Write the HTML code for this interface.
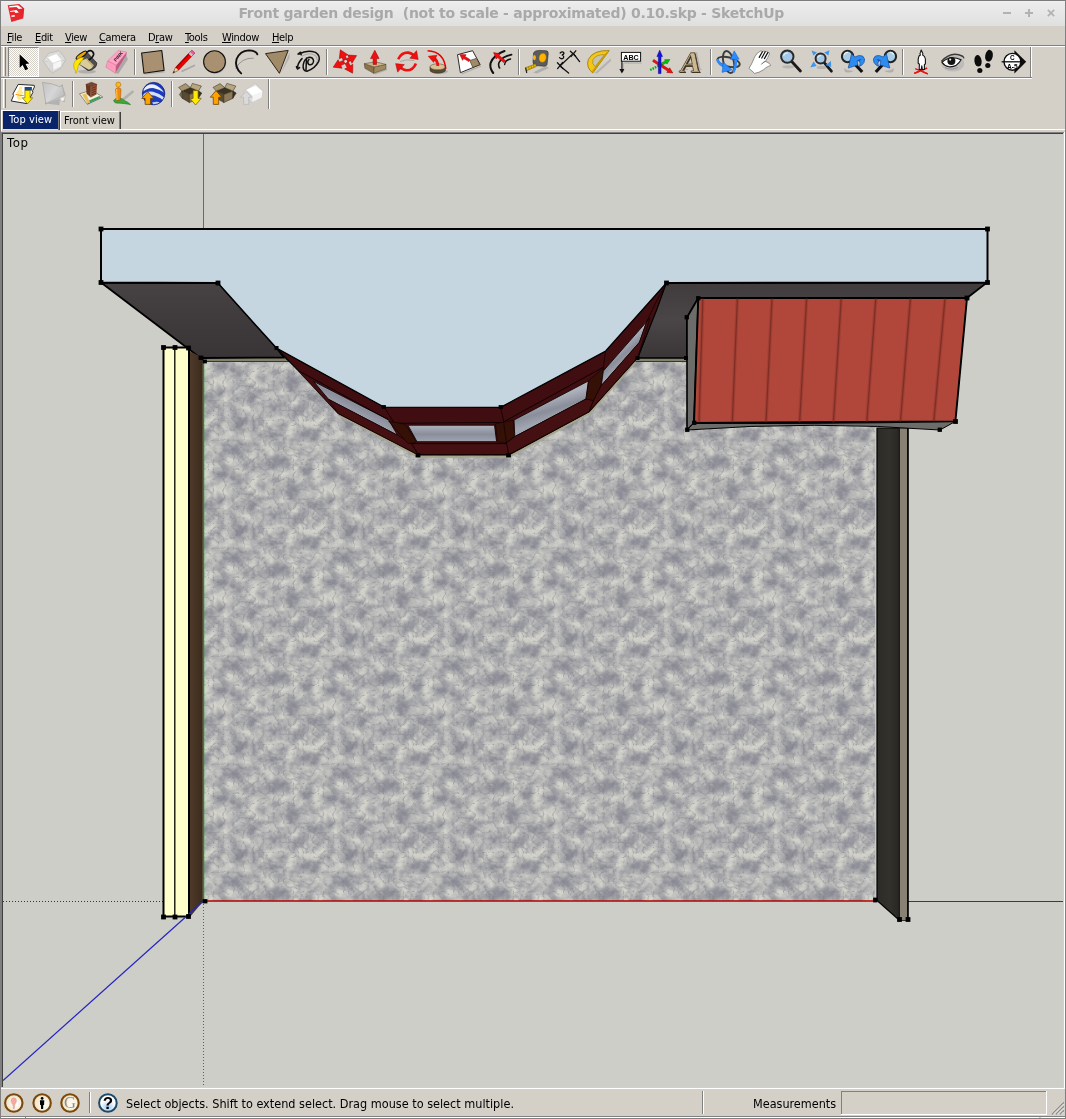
<!DOCTYPE html>
<html lang="en">
<head>
<meta charset="utf-8">
<title>Front garden design (not to scale - approximated) 0.10.skp - SketchUp</title>
<style>
*{box-sizing:border-box;margin:0;padding:0}
html,body{width:1066px;height:1119px;overflow:hidden;background:#d4d0c8}
body{position:relative;font-family:"DejaVu Sans Condensed","DejaVu Sans","Liberation Sans",sans-serif;font-size:11px;color:#000}
.abs{position:absolute}
#frame{position:absolute;left:0;top:0;width:1066px;height:1119px;border:1px solid #808080;border-top-color:#7a7a7a;pointer-events:none;z-index:50}
#title{position:absolute;left:1px;top:1px;width:1064px;height:25px;background:linear-gradient(#f3f3f3 0,#ececec 6%,#e7e7e7 45%,#e1e1e1 90%,#e0e0e0 100%);}
#title .t{will-change:transform;position:absolute;left:0;width:1020.4px;top:4px;text-align:center;font-family:"DejaVu Sans","Liberation Sans",sans-serif;font-weight:bold;font-size:14px;color:#a9a9a9;white-space:pre;letter-spacing:-0.26px}
#menubar{position:absolute;left:1px;top:26px;width:1064px;height:19px;background:#d4d0c8}
#menubar span{will-change:transform;position:absolute;top:5px;font-size:11px;line-height:13px;white-space:nowrap;letter-spacing:-0.35px}
#menubar u{text-decoration:underline;text-underline-offset:1px}
.hl-d{position:absolute;height:1px;background:#808080}
.hl-w{position:absolute;height:1px;background:#ffffff}
.vl-d{position:absolute;width:1px;background:#808080}
.vl-w{position:absolute;width:1px;background:#ffffff}
.ico{position:absolute;width:24px;height:24px;overflow:visible}
#tabs span{will-change:transform;position:absolute;font-size:11px;line-height:13px;white-space:nowrap}
#view{position:absolute;left:3px;top:134px;width:1060px;height:953px;background:#cdcec8;overflow:hidden}
#status{position:absolute;left:1px;top:1090px;width:1064px;height:28px}
#status span{will-change:transform;position:absolute;font-size:11px;line-height:13px;white-space:nowrap}
</style>
</head>
<body>
<div id="title"><div class="t">Front garden design  (not to scale - approximated) 0.10.skp - SketchUp</div>
<svg class="abs" style="left:0;top:0" width="1064" height="25" viewBox="1 1 1064 25">
<g>
<polygon points="7.7,5.2 19.1,3.9 24.2,8.4 23.1,18.4 11.3,22" fill="#e8282e"/>
<polygon points="19.1,3.9 24.2,8.4 23.1,18.4 21,14 20.5,8" fill="#de2026" opacity=".6"/>
<polygon points="9,6.2 18,5.3 22.5,8.4 18.8,9 16.5,7.1 9.4,7.5" fill="#fff"/>
<polygon points="10.1,10.9 16.5,10.1 18.8,12.6 15.4,12.9 14.3,11.6 10.3,12" fill="#fff"/>
<polygon points="11.3,15.4 14.6,15 15,16.5 11.6,17.1" fill="#fff"/>
</g>
<g fill="#b2b2b2">
<rect x="1003" y="12" width="8" height="2"/>
<rect x="1025" y="12" width="8" height="2"/><rect x="1028" y="9" width="2" height="8"/>
<path d="M1047.2,10.4 L1048.4,9.2 L1051,11.8 L1053.6,9.2 L1054.8,10.4 L1052.2,13 L1054.8,15.6 L1053.6,16.8 L1051,14.2 L1048.4,16.8 L1047.2,15.6 L1049.8,13Z"/>
</g></svg>
</div>
<div id="menubar">
<span style="left:5.7px"><u>F</u>ile</span>
<span style="left:33.7px"><u>E</u>dit</span>
<span style="left:64px"><u>V</u>iew</span>
<span style="left:98px"><u>C</u>amera</span>
<span style="left:146.7px">D<u>r</u>aw</span>
<span style="left:183.7px"><u>T</u>ools</span>
<span style="left:220.9px"><u>W</u>indow</span>
<span style="left:270.6px"><u>H</u>elp</span>
</div>
<div id="toolbars">
<div class="hl-d" style="left:1px;top:45px;width:1064px"></div>
<div class="hl-w" style="left:1px;top:46px;width:1064px"></div>
<div class="hl-d" style="left:1px;top:77px;width:1031px"></div>
<div class="hl-w" style="left:1px;top:78px;width:1031px"></div>
<div class="vl-w" style="left:3px;top:47px;height:29px"></div>
<div class="vl-d" style="left:5px;top:47px;height:29px"></div>
<div class="vl-w" style="left:3px;top:79px;height:29px"></div>
<div class="vl-d" style="left:5px;top:79px;height:29px"></div>
<div class="abs" style="left:8px;top:47px;width:31px;height:30px;border:1px solid;border-color:#808080 #fff #fff #808080;background-color:#fff;background-image:conic-gradient(#d4d0c8 25%,#fff 0 50%,#d4d0c8 0 75%,#fff 0);background-size:2px 2px"></div>
<svg class="abs" style="left:0;top:46px;will-change:transform" width="1066" height="64" viewBox="0 46 1066 64"><defs><linearGradient id="terr" x1="0" y1="0" x2="1" y2=".6"><stop offset="0" stop-color="#c2c2c2"/><stop offset=".55" stop-color="#d6d6d6"/><stop offset="1" stop-color="#bcbcbc"/></linearGradient></defs>
<g transform="translate(8,46)"><polygon points="11.6,8.2 11.6,22 14.6,19 17.2,24.3 20.2,23 17.6,17.9 21.4,17.6" fill="#000" stroke="#fff" stroke-width="1.2" stroke-linejoin="round" paint-order="stroke"/></g>
<g transform="translate(39,46)"><polygon points="4,14.6 9.6,7.4 20.6,4.6 26.8,13.6 22,22 12.8,27.4" fill="#e6e6e6" fill-opacity=".6" stroke="#bdbdbd" stroke-width="1"/>
<path d="M4,14.6 L14.6,17.8 L26.8,13.6 M14.6,17.8 L12.8,27.4" fill="none" stroke="#c6c6c6" stroke-width=".9"/>
<path d="M9.6,7.4 L10.2,17 L12.8,27.4 M20.6,4.6 L21.4,14 L22,22 M10.2,17 L21.4,14" fill="none" stroke="#d0d0d0" stroke-width=".7"/>
<polygon points="8.5,11.6 13.8,17.4 13.8,24 9.1,17.8" fill="#d8d8d8"/>
<polygon points="13.8,17.4 22.5,14 21.9,20.3 13.8,24" fill="#f6f6f6"/>
<polygon points="8.5,11.6 17.3,8.1 22.5,14 13.8,17.4" fill="#ffffff"/>
<path d="M8.5,11.6 L13.8,17.4 L22.5,14 M13.8,17.4 L13.8,24" fill="none" stroke="#c8c8c8" stroke-width=".5"/></g>
<g transform="translate(70,46)"><ellipse cx="17" cy="25.6" rx="9" ry="1.9" fill="#9a9a9a" opacity=".6"/>
<path d="M16.3,5.6 L26.8,16.9 Q27,19.6 24.6,22 Q21.6,24.6 18,24.6 L9.3,18 L6.6,12.6Z" fill="#4e4e4e" stroke="#1c1c1c" stroke-width=".7" stroke-linejoin="round"/>
<path d="M11.4,14.6 L17,12.4 L23.6,19.2 Q22.4,22.6 19,23.8 L9.9,18.4Z" fill="#dacd9a"/>
<path d="M17,12.4 L23.6,19.2 L22.8,20.8 L16,13.4Z" fill="#b8ab7a"/>
<ellipse cx="11.4" cy="9.2" rx="6.3" ry="2" transform="rotate(-36 11.4 9.2)" fill="#f0a400" stroke="#111" stroke-width="1.1"/>
<path d="M17.5,5.8 Q20,3.6 22.6,5.6 Q24.8,8 22.6,10.8 Q21,12.8 19.2,13.7" fill="none" stroke="#111" stroke-width="1.6" stroke-linecap="round"/>
<path d="M13.7,11.3 Q10.6,11.4 8.7,12.5 Q6,13.6 4.4,16 Q2.8,18.8 4.2,22.4 Q5.2,24 5.6,25.2 Q5,26.6 5.6,27.2 Q6.8,27.2 6.6,25.8 Q7.8,23.4 7.8,21.6 Q8.2,18.8 9.9,16.9 Q11.4,15 12.8,13.4Z" fill="#ffe600" stroke="#a88a00" stroke-width=".5"/></g>
<g transform="translate(101,46)"><polygon points="14.4,27.3 25.4,9 26.8,13.6 17.4,27.8" fill="#9c9c9c" opacity=".75"/>
<polygon points="15.2,19.2 25.7,6.1 25.4,9 14.4,27.3" fill="#c05a84"/>
<polygon points="6.8,14.8 15.2,19.2 14.4,27.3 4.8,21.2" fill="#ff9cbc" stroke="#c86088" stroke-width=".4"/>
<polygon points="6.8,14.8 17.3,4.4 25.7,6.1 15.2,19.2" fill="#ffa6c4" stroke="#c86088" stroke-width=".4"/>
<text x="0" y="0" transform="translate(15,16) rotate(-51)" font-family="Liberation Sans, sans-serif" font-weight="bold" font-size="4.8" fill="#3a1c28">PINK</text></g>
<rect x="134" y="49" width="1" height="26" fill="#808080"/><rect x="135" y="49" width="1" height="26" fill="#fff"/>
<g transform="translate(138,46)"><polygon points="6.5,27.8 26.5,25.2 26.8,26.4 6.8,28.6" fill="#9a9a9a" opacity=".6"/>
<polygon points="3.6,7 23.8,4.5 26.1,24.4 5.9,27.2" fill="#a89070" stroke="#141414" stroke-width="1.1" stroke-linejoin="round"/></g>
<g transform="translate(169,46)"><line x1="12.5" y1="25.5" x2="26" y2="19.2" stroke="#9c9ca0" stroke-width="1.6" opacity=".8"/>
<g transform="translate(3.9,27.2) rotate(-46.5)">
<polygon points="0,0 6,-2.1 6,2.1" fill="#e8d8a0"/>
<polygon points="0,0 2.3,-0.8 2.3,0.8" fill="#111"/>
<rect x="6" y="-2.1" width="19" height="4.2" fill="#ee0000"/>
<rect x="6" y="-2.1" width="19" height="1.2" fill="#b00000"/>
<rect x="25" y="-2.1" width="2" height="4.2" fill="#c8c8c8"/>
<rect x="27" y="-2.1" width="2.8" height="4.2" rx="1" fill="#ff50b0"/>
<polygon points="0,0 6,-2.1 29.8,-2.1 29.8,2.1 6,2.1" fill="none" stroke="#400" stroke-width=".4"/>
</g></g>
<g transform="translate(200,46)"><ellipse cx="15.3" cy="16.6" rx="11" ry="11" fill="#9a9a9a" opacity=".5"/>
<circle cx="14.5" cy="15.7" r="10.9" fill="#a89070" stroke="#111" stroke-width="1.1"/></g>
<g transform="translate(231,46)"><path d="M22.7,12.2 Q10.5,11.5 4.7,22.5" fill="none" stroke="#8c8c8c" stroke-width=".9"/>
<path d="M26.4,8.3 Q25,4.6 17.5,4.4 Q9,5 5.6,13 Q3.2,21 10.2,27.4" fill="none" stroke="#111" stroke-width="1.9" stroke-linecap="round"/></g>
<g transform="translate(262,46)"><polygon points="19,27.3 27.5,6.5 27.5,12" fill="#9c9ca0" opacity=".6"/>
<polygon points="3.5,7.6 26.2,4.4 17.4,27.3" fill="#a08a68" stroke="#2c2418" stroke-width="1" stroke-linejoin="round"/></g>
<g transform="translate(293,46)"><path d="M9,10 Q17,5.5 23,10 Q26,14 23,19" fill="none" stroke="#9a9a9a" stroke-width=".8"/>
<path d="M6,8.2 Q14,3.2 22.5,6.4 Q28,10 25.6,15.6 Q22,22.5 14,25.2 Q9.5,25 10.2,19 Q11,13 15.5,11.4 Q20,11 20.6,15 Q20,19.5 16,18.6 Q13.5,16.5 16,13.4 M13.5,12 L13,24 M9,12.6 Q4.6,17 4.4,22.5 M3.4,20.6 L4.4,23 L6.6,21.6 M5,8 l2.6,-1.8 l.6,2.6" fill="none" stroke="#111" stroke-width="1.5" stroke-linecap="round" stroke-linejoin="round"/></g>
<rect x="326" y="49" width="1" height="26" fill="#808080"/><rect x="327" y="49" width="1" height="26" fill="#fff"/>
<g transform="translate(330,46)"><circle cx="15.7" cy="15.3" r="3" fill="#e8e8e8"/><polygon points="16.7,13.2 15.2,9.9 17.8,8.7 10.3,3.8 9.3,12.7 11.9,11.4 13.4,14.7" fill="#f01010" stroke="#900000" stroke-width=".5" stroke-linejoin="round"/><polygon points="17.8,16.2 20.7,14.7 22.0,17.3 26.6,9.6 17.7,9.0 19.0,11.5 16.2,13.0" fill="#f01010" stroke="#900000" stroke-width=".5" stroke-linejoin="round"/><polygon points="15.0,17.6 17.2,21.5 14.7,23.0 22.6,27.2 22.9,18.3 20.3,19.7 18.1,15.8" fill="#f01010" stroke="#900000" stroke-width=".5" stroke-linejoin="round"/><polygon points="13.4,14.4 9.3,16.3 8.1,13.7 3.2,21.2 12.1,22.2 10.8,19.6 15.0,17.6" fill="#f01010" stroke="#900000" stroke-width=".5" stroke-linejoin="round"/></g>
<g transform="translate(361,46)"><polygon points="13,27.6 25.6,23 26.6,24 14,28.6" fill="#9a9a9a" opacity=".6"/>
<polygon points="3.3,17.7 13.2,20.9 12.6,27.3 3.9,22.3" fill="#8a7450" stroke="#4a3c24" stroke-width=".5"/>
<polygon points="13.2,20.9 25,18.4 25,22.9 12.6,27.3" fill="#a08a62" stroke="#4a3c24" stroke-width=".5"/>
<polygon points="3.3,17.7 14.4,15.8 25,18.4 13.2,20.9" fill="#cdb88c" stroke="#4a3c24" stroke-width=".5"/>
<polygon points="15.5,18.4 15.5,12.6 18.1,12.6 13.8,4.2 9.5,12.6 12.1,12.6 12.1,18.4" fill="#f01010" stroke="#900000" stroke-width=".5" stroke-linejoin="round"/></g>
<g transform="translate(392,46)"><path d="M6.2,13.2 Q9.5,6.2 16.2,6.6 Q20.4,7.2 22.4,10.4" fill="none" stroke="#f01010" stroke-width="2.6"/>
<polygon points="24.6,4.6 26.2,13.6 17.8,12.2" fill="#f01010" stroke="#900" stroke-width=".4"/>
<path d="M23.9,17.4 Q21,24.6 14.2,24.2 Q10,23.6 8,20.8" fill="none" stroke="#f01010" stroke-width="2.6"/>
<polygon points="5.6,26.2 3.6,17.6 12.4,18.6" fill="#f01010" stroke="#900" stroke-width=".4"/>
<path d="M8,15.5 Q14,12.8 22,14.4" fill="none" stroke="#909090" stroke-width=".9" opacity=".7"/></g>
<g transform="translate(423,46)"><ellipse cx="16.4" cy="25.6" rx="8.6" ry="2.2" fill="#9a9a9a" opacity=".6"/>
<path d="M7,20.8 L7,24.2 A7.7,3 0 0 0 22.4,24.2 L22.4,20.8Z" fill="#5a4a32" stroke="#2c2414" stroke-width=".5"/>
<ellipse cx="14.7" cy="20.8" rx="7.7" ry="3" fill="#d6c296" stroke="#4a3c24" stroke-width=".5"/>
<path d="M4.6,4.8 Q21,5.5 22.8,23" fill="none" stroke="#e00000" stroke-width="1.5"/>
<path d="M14.8,20 Q14.8,13.8 9.4,11" fill="none" stroke="#f01010" stroke-width="2.8"/>
<polygon points="5.2,10.2 14,9.2 10.6,16.4" fill="#f01010" stroke="#900" stroke-width=".4"/></g>
<g transform="translate(454,46)"><polygon points="7.4,27.4 27,19.4 27.4,20.6 8,28.4" fill="#9a9a9a" opacity=".6"/>
<polygon points="3.5,8.7 18.6,4.7 26.2,18.6 6.4,26.7" fill="#ffffff" stroke="#2a2a2a" stroke-width="1" stroke-linejoin="round"/>
<polygon points="15.7,14.5 22.1,12.4 25.8,18.6 18.8,21.4" fill="#a08a68" stroke="#3a3020" stroke-width=".6"/>
<polygon points="16.0,13.6 11.0,10.4 12.1,8.7 5.8,8.6 8.6,14.3 9.7,12.5 14.8,15.6" fill="#f01010" stroke="#900000" stroke-width=".5" stroke-linejoin="round"/></g>
<g transform="translate(485,46)"><path d="M19.5,5 Q8.5,9 5.6,17 Q4.4,22 8.2,27" fill="none" stroke="#111" stroke-width="2.1" stroke-linecap="round"/>
<path d="M26.6,8.6 Q17,10.5 14,16.5 Q13,19.5 14.6,22" fill="none" stroke="#111" stroke-width="1.6" stroke-linecap="round"/>
<path d="M25.6,13 Q20,14 19.6,18.6" fill="none" stroke="#111" stroke-width="1.3" stroke-linecap="round"/>
<polygon points="20.4,14.6 14.1,9.4 15.3,7.8 8.6,6.6 11.2,13.0 12.4,11.4 18.8,16.6" fill="#f01010" stroke="#900000" stroke-width=".5" stroke-linejoin="round"/></g>
<rect x="518" y="49" width="1" height="26" fill="#808080"/><rect x="519" y="49" width="1" height="26" fill="#fff"/>
<g transform="translate(522,46)"><polygon points="11,26.6 24,20 27,22 15,27.6" fill="#9a9a9a" opacity=".6"/>
<path d="M11.6,6.8 Q13,4.2 18,4.4 L24.6,4.8 Q26.6,5.2 26.2,8 L25,18.6 Q24.4,20.4 22,20.2 L14,19.6 Q11,19 11,16Z" fill="#5c5c5c" stroke="#2a2a2a" stroke-width=".6"/>
<ellipse cx="20.6" cy="11.8" rx="3.6" ry="4.6" transform="rotate(12 20.6 11.8)" fill="#ffb400" stroke="#8a6000" stroke-width=".4"/>
<ellipse cx="12.4" cy="11.6" rx="1.5" ry="2.6" fill="#ffb400"/>
<polygon points="3.4,21.8 13.6,17.8 14.4,20.4 4.4,24.8" fill="#f0c000" stroke="#5a4600" stroke-width=".5"/>
<path d="M3.6,21.6 L4.8,27" stroke="#222" stroke-width="1.2"/>
<path d="M6.5,21 l.8,2.2 M9,20 l.8,2.2 M11.4,19 l.8,2.2" stroke="#5a4600" stroke-width=".5"/></g>
<g transform="translate(553,46)"><g fill="none" stroke="#111" stroke-width="1.3" stroke-linecap="round">
<path d="M7,20 L20.2,7.4"/><path d="M20.2,7.4 L26.6,15.6"/><path d="M7,20 L15.6,27"/>
<path d="M17.4,5.2 L22.6,10.2 M22.8,4.8 L18,10.6"/><path d="M4.4,16.8 L10,22.6 M9.6,16.4 L4.6,22.6"/>
<path d="M7.2,7 Q9.4,4.6 11,7 Q10.6,9 8.8,9 Q11.4,9.6 10.4,12 Q8.4,13.6 6.6,11.6"/></g></g>
<g transform="translate(584,46)"><polygon points="10.6,27 26.6,12.6 27,15 13,27.6" fill="#9a9a9a" opacity=".55"/>
<path d="M25.2,4.6 L8.8,27 Q1.6,21.4 4.4,13.4 Q9,4 25.2,4.6Z" fill="#f4c618" stroke="#a07c00" stroke-width=".9" stroke-linejoin="round"/>
<path d="M20.6,8.6 L11.2,20.6 Q7.4,18 9,13.6 Q12,8.4 20.6,8.6Z" fill="#c4c4b4" stroke="#a07c00" stroke-width=".6"/>
<path d="M23.6,6 L8.4,25.6" stroke="#c89c00" stroke-width="1.4" fill="none"/></g>
<g transform="translate(615,46)"><path d="M9.2,17 L26.6,17 M8,17 L8,26" stroke="#a8a8a8" stroke-width="1.2" fill="none"/>
<rect x="6.4" y="6.4" width="19.2" height="8.8" fill="#fff" stroke="#111" stroke-width="1"/>
<text x="16" y="13.7" text-anchor="middle" font-family="Liberation Sans, sans-serif" font-weight="bold" font-size="7.6" fill="#000" textLength="15.5" lengthAdjust="spacingAndGlyphs">ABC</text>
<path d="M6.9,15 L6.9,24" stroke="#111" stroke-width="1.1"/>
<polygon points="4.4,23 9.4,23 6.9,27.6" fill="#111"/></g>
<g transform="translate(646,46)"><path d="M4.2,24 L13.7,19.3" stroke="#00b400" stroke-width="2.4" stroke-dasharray="1.6,1" fill="none"/>
<polygon points="14.2,20.3 20.3,16.8 21.0,18.0 23.8,13.6 18.6,13.7 19.3,14.9 13.2,18.3" fill="#00c800" stroke="#006400" stroke-width=".5" stroke-linejoin="round"/><polygon points="6.6,15.4 21.6,25.1 20.8,26.4 26.8,27.0 23.7,21.8 22.9,23.1 7.8,13.4" fill="#f01010" stroke="#800" stroke-width=".5" stroke-linejoin="round"/><polygon points="15.0,27.6 15.0,10.6 16.5,10.6 13.7,4.2 10.9,10.6 12.4,10.6 12.4,27.6" fill="#1414e6" stroke="#000080" stroke-width=".5" stroke-linejoin="round"/></g>
<g transform="translate(677,46)"><g transform="translate(15,0) skewX(-10) translate(-15,0)">
<text x="19.4" y="24.4" text-anchor="middle" font-family="Liberation Serif, serif" font-weight="bold" font-size="27" fill="#9a9a9a" opacity=".55">A</text>
<text x="18" y="27.4" text-anchor="middle" font-family="Liberation Serif, serif" font-weight="bold" font-size="29" fill="#3c3224">A</text>
<text x="17.4" y="26.8" text-anchor="middle" font-family="Liberation Serif, serif" font-weight="bold" font-size="29" fill="#3c3224">A</text>
<text x="16.8" y="26" text-anchor="middle" font-family="Liberation Serif, serif" font-weight="bold" font-size="29" fill="#ccb890" stroke="#4a3c28" stroke-width=".7">A</text></g></g>
<rect x="710" y="49" width="1" height="26" fill="#808080"/><rect x="711" y="49" width="1" height="26" fill="#fff"/>
<g transform="translate(714,46)"><ellipse cx="14.6" cy="16" rx="5.2" ry="11.2" transform="rotate(-14 14.6 16)" fill="none" stroke="#3c3c3c" stroke-width="1.9"/>
<ellipse cx="14.6" cy="16" rx="11.4" ry="4.6" transform="rotate(14 14.6 16)" fill="none" stroke="#3c3c3c" stroke-width="1.9"/>
<path d="M3.4,13 Q4,18.5 13,21.6" fill="none" stroke="#2c8cff" stroke-width="2.6"/>
<polygon points="9.4,16 18,24 8,26.4" fill="#2c8cff" stroke="#0a4cb0" stroke-width=".4"/>
<path d="M19.4,26.2 Q22.6,20 21.6,12" fill="none" stroke="#2c8cff" stroke-width="2.6"/>
<polygon points="16.4,13.4 20.2,4.8 25.2,13.2" fill="#2c8cff" stroke="#0a4cb0" stroke-width=".4"/></g>
<g transform="translate(745,46)"><path d="M4,22.4 Q7.4,17 9.6,11 Q12,6.4 15.2,5.2 Q16.6,4.6 17.4,5.6 Q19,4.6 20.2,5.6 Q22,5 22.8,6.2 Q24.6,6.2 24.4,8 Q23,11.6 20.4,15.4 Q23,16 25.6,18.8 Q25.6,20.4 23.6,20.2 Q21,21.2 18.4,23.8 Q14,26.8 9.6,27.4Z" fill="#fff" stroke="#555" stroke-width=".6"/>
<path d="M17.4,5.8 L14.2,11.4 M20.2,5.8 L16.8,12 M22.8,6.6 L19.4,12.6" stroke="#111" stroke-width="1.2" fill="none" stroke-linecap="round"/>
<path d="M20.4,15.4 Q18,16 16.4,18.4" stroke="#444" stroke-width=".9" fill="none"/></g>
<g transform="translate(776,46)"><ellipse cx="12.3" cy="20.8" rx="6.2" ry="1.6" fill="#9a9a9a" opacity=".5"/>
<line x1="15.5" y1="15.2" x2="24.4" y2="25.0" stroke="#1a1a1a" stroke-width="2.8" stroke-linecap="round"/>
<circle cx="11.3" cy="10.6" r="6.2" fill="#a4c8e6" stroke="#2a2a2a" stroke-width="2"/>
<path d="M7.6,10.0 a3.7,3.7 0 0 1 4.3,-2.8" fill="none" stroke="#dcecf8" stroke-width="1.2"/></g>
<g transform="translate(807,46)"><ellipse cx="14.6" cy="21.4" rx="5.0" ry="1.6" fill="#9a9a9a" opacity=".5"/>
<line x1="16.8" y1="16.2" x2="24.4" y2="25.2" stroke="#1a1a1a" stroke-width="2.8" stroke-linecap="round"/>
<circle cx="13.6" cy="12.4" r="5.0" fill="#a4c8e6" stroke="#2a2a2a" stroke-width="2"/>
<path d="M10.6,11.9 a3.0,3.0 0 0 1 3.5,-2.2" fill="none" stroke="#dcecf8" stroke-width="1.2"/><polygon points="4.6,4.6 10,6.6 6.4,9.6" fill="#3c96f0"/><polygon points="22.4,4.2 21.4,9.6 17.2,6.4" fill="#3c96f0"/><polygon points="3.2,21.6 6.6,15.6 9.6,20" fill="#3c96f0"/><polygon points="24,15 24.2,21 18.6,19" fill="#3c96f0"/></g>
<g transform="translate(838,46)"><path d="M6,22 Q10,25.6 16,24.6 Q13,27.6 7,26Z" fill="#9a9a9a" opacity=".6"/>
<line x1="14" y1="15" x2="24.2" y2="26" stroke="#111" stroke-width="3.2" stroke-linecap="butt"/>
<circle cx="9.6" cy="10.5" r="5.7" fill="#a8cce4" stroke="#222" stroke-width="2"/>
<path d="M6.2,9 a3.6,3.6 0 0 1 4,-2.6" fill="none" stroke="#e4f0f8" stroke-width="1.3"/>
<path d="M10.2,22.1 L13.6,7.8 L16.8,11 Q21,8.4 24.6,10 Q27.8,12.6 26,16.6 Q24.2,19.6 21.4,20.4 Q22.6,17.4 21.6,15.6 Q20.4,14.4 19.2,14.8 L20,19 Z" fill="#2c8cf0" stroke="#0a3c90" stroke-width=".6" stroke-linejoin="round"/>
<path d="M19.2,14.8 Q21,12.6 23.6,13.6 Q22,14 21.6,15.6" fill="#1a50b0"/></g>
<g transform="translate(869,46)"><g transform="translate(31,0) scale(-1,1)"><path d="M6,22 Q10,25.6 16,24.6 Q13,27.6 7,26Z" fill="#9a9a9a" opacity=".6"/>
<line x1="14" y1="15" x2="24.2" y2="26" stroke="#111" stroke-width="3.2" stroke-linecap="butt"/>
<circle cx="9.6" cy="10.5" r="5.7" fill="#a8cce4" stroke="#222" stroke-width="2"/>
<path d="M6.2,9 a3.6,3.6 0 0 1 4,-2.6" fill="none" stroke="#e4f0f8" stroke-width="1.3"/>
<path d="M10.2,22.1 L13.6,7.8 L16.8,11 Q21,8.4 24.6,10 Q27.8,12.6 26,16.6 Q24.2,19.6 21.4,20.4 Q22.6,17.4 21.6,15.6 Q20.4,14.4 19.2,14.8 L20,19 Z" fill="#2c8cf0" stroke="#0a3c90" stroke-width=".6" stroke-linejoin="round"/>
<path d="M19.2,14.8 Q21,12.6 23.6,13.6 Q22,14 21.6,15.6" fill="#1a50b0"/></g></g>
<rect x="902" y="49" width="1" height="26" fill="#808080"/><rect x="903" y="49" width="1" height="26" fill="#fff"/>
<g transform="translate(906,46)"><path d="M8.2,27.4 L21.2,22 M9.2,22.6 L21.8,27.8" stroke="#f01010" stroke-width="1.4" fill="none"/>
<path d="M15.2,4 L16.2,6.2 Q17.4,7.6 16.6,9 Q19,10 19.4,13 L19.4,18 L18.4,18.4 L18.4,23.4 L16.4,23.6 L15.8,19.8 L15.2,23.6 L13.2,23.4 L13.4,18 L12.2,17.4 Q11.6,13 13,10 L14.4,9 Q13.4,7.4 14.6,6.2Z" fill="#fff" stroke="#111" stroke-width="1.1" stroke-linejoin="round"/>
<path d="M8.2,27.4 L14,25 M21.8,27.8 L16.6,25.6" stroke="#f01010" stroke-width="1.4" fill="none"/></g>
<g transform="translate(937,46)"><ellipse cx="15.8" cy="17.4" rx="11.4" ry="8.2" fill="#b4b4b0" opacity=".7"/>
<path d="M4.4,15.6 Q14,4.6 25.6,10.2 Q27,11.4 26.6,12.4" fill="none" stroke="#3a3a3a" stroke-width="1.5"/>
<path d="M5,16.4 Q13,8.6 24,13.8 Q20,21.4 12,20.8 Q7.4,20 5,16.4Z" fill="#fff" stroke="#111" stroke-width="1.1"/>
<circle cx="14.4" cy="15" r="4" fill="#141414"/>
<circle cx="13.2" cy="13.6" r="1.1" fill="#e8e8e8"/>
<path d="M8,21.6 Q14,24.6 21,21.4" fill="none" stroke="#8a8a8a" stroke-width=".8"/></g>
<g transform="translate(968,46)"><ellipse cx="10" cy="15" rx="3.6" ry="6" transform="rotate(-8 10 15)" fill="#0c0c0c"/>
<ellipse cx="11.8" cy="24.6" rx="2.6" ry="2.5" fill="#0c0c0c"/>
<ellipse cx="21" cy="9.8" rx="3.8" ry="6" transform="rotate(10 21 9.8)" fill="#0c0c0c"/>
<ellipse cx="19.8" cy="19.4" rx="2.6" ry="2.5" fill="#0c0c0c"/>
<path d="M7.6,21.2 L14.6,20.6 M17,15.8 L23.6,16.6" stroke="#d4d0c8" stroke-width="1"/></g>
<g transform="translate(999,46)"><polygon points="15.4,4.2 27.2,15.8 15.4,27.4" fill="#0c0c0c"/>
<circle cx="13.4" cy="15.8" r="8.4" fill="#fff" stroke="#0c0c0c" stroke-width="1.4"/>
<path d="M2.6,15.8 L22,15.8" stroke="#0c0c0c" stroke-width="1.3"/>
<text x="13.4" y="14.2" text-anchor="middle" font-family="Liberation Sans, sans-serif" font-weight="bold" font-size="6.4" fill="#000">C</text>
<text x="13.4" y="22.6" text-anchor="middle" font-family="Liberation Sans, sans-serif" font-weight="bold" font-size="6.4" fill="#000" textLength="10.6" lengthAdjust="spacingAndGlyphs">A-5</text></g>
<rect x="1030" y="47" width="1" height="30" fill="#808080"/><rect x="1031" y="47" width="1" height="30" fill="#fff"/>
<g transform="translate(8,78)"><path d="M10.2,6.4 L26.2,7.3 Q27,9 25.4,11 Q24,12.8 24.8,14.6 L18.9,25.6 L3.2,23 L5.6,17.6 L4.9,16Z" fill="#fff" stroke="#2a2a2a" stroke-width="1" stroke-linejoin="round"/>
<path d="M11.5,8.6 L14.6,8.8 L13.4,12 L15.4,15 L13,17 L14,21.6 L10.6,22.8 L8.4,19.6 L10,16.4 L8.2,14.6 L10.6,12Z" fill="#ffe680" opacity=".85"/>
<path d="M7.6,16.3 Q11,17.6 15.7,17.5" fill="none" stroke="#f08a10" stroke-width="1"/>
<rect x="16.6" y="9" width="7.3" height="3.6" fill="#1c4a8c"/>
<polygon points="19.5,25.8 24.7,19.8 22.1,19.8 22.1,12.5 16.9,12.5 16.9,19.8 14.3,19.8" fill="#ffee00" stroke="#7a6400" stroke-width=".7" stroke-linejoin="round"/></g>
<g transform="translate(39,78)"><polygon points="6.8,25.6 20.8,20.4 20.5,27.3" fill="#b2b2b2"/>
<path d="M23.1,7.3 L26.6,17.5 L25.1,23.3 L21.4,22.7 L25.7,17.2Z" fill="#dadada" stroke="#b4b4b4" stroke-width=".6"/>
<path d="M3.6,4.4 Q13,5 21,8.8 L23.1,7.3 L25.7,17.2 L6.8,25.6Z" fill="url(#terr)" stroke="#a8a8a8" stroke-width=".8" stroke-linejoin="round"/>
<rect x="22.2" y="19.6" width="2.6" height="3" fill="#f4f4f4"/>
<circle cx="23.1" cy="7.3" r=".9" fill="#aaa"/><circle cx="6.8" cy="25.6" r=".9" fill="#aaa"/><circle cx="25.1" cy="23.3" r=".8" fill="#aaa"/></g>
<rect x="72" y="81" width="1" height="26" fill="#808080"/><rect x="73" y="81" width="1" height="26" fill="#fff"/>
<g transform="translate(76,78)"><polygon points="3.5,15.8 15.5,12.1 26.9,19.1 11.3,26.4" fill="#f4f0e0" stroke="#6a6a5a" stroke-width=".7" stroke-linejoin="round"/>
<polygon points="6,16.6 10,15.4 14,24.4 11.4,25.6" fill="#e8c060"/>
<polygon points="11.4,25.6 14,24.4 25,19.4 26.2,19.4 11.6,26.2" fill="#2a6ac0"/>
<polygon points="13,22.6 23.4,18 25,19.4 14,24.4" fill="#3aa04a"/>
<polygon points="9.8,6.4 14.8,8.6 14.8,19.4 10.6,15.8" fill="#6a3420"/>
<polygon points="14.8,8.6 21.1,6.4 20.4,16.4 14.8,19.4" fill="#9a5438"/>
<polygon points="9.8,6.4 15.5,4.2 21.1,6.4 14.8,8.6" fill="#7a4430" stroke="#3a1c10" stroke-width=".4"/>
<path d="M15.6,10.4 l4.6,-1.8 M15.6,12.6 l4.6,-1.8 M15.6,14.8 l4.6,-1.8 M15.6,17 l4.6,-1.8" stroke="#4a2414" stroke-width=".7"/></g>
<g transform="translate(107,78)"><path d="M15,22.4 L25.6,13.8" stroke="#a8a8a4" stroke-width="2.6" stroke-linecap="round" opacity=".8"/>
<path d="M6.6,22.4 Q8.4,19.6 12.6,20 Q16,20.6 17.4,22.4 Q21,24 23.6,26.6 Q17,25.4 13,25.2 Q7,25.6 6.6,22.4Z" fill="#3aa83a" stroke="#1c6c1c" stroke-width=".5"/>
<path d="M8.6,11.4 Q8.8,9.8 11.2,9.8 Q13.8,9.8 14,11.4 L13.6,17.6 L13,22.6 L9.8,22.6 L9.2,17.6Z" fill="#f08a10" stroke="#a04c00" stroke-width=".5"/>
<path d="M9.6,11 L10,22" stroke="#ffc040" stroke-width="1.2"/>
<circle cx="11.3" cy="6.6" r="2.5" fill="#ffb820" stroke="#a06000" stroke-width=".5"/></g>
<g transform="translate(138,78)"><circle cx="15.6" cy="15.6" r="11.2" fill="#1c3cc0"/>
<path d="M5.6,11 Q10,5 16,6.6 Q22,8.6 26,14.6 Q22,11.6 16,10.2 Q10,9.4 5.2,13.6Z" fill="#fff" opacity=".92"/>
<path d="M4.6,17.6 Q8,12.6 15,13.8 Q22,15.6 26.4,19.6 Q25.6,21.6 25,22.2 Q20,18 14,17.2 Q8,17 5.2,20Z" fill="#e8f0ff" opacity=".9"/>
<path d="M14,24.6 Q19,23 22,24.4 Q19,26.8 15.6,26.8Z" fill="#dce8ff" opacity=".85"/>
<circle cx="15.6" cy="15.6" r="11.2" fill="none" stroke="#0c1c70" stroke-width=".8"/>
<polygon points="9.8,13.8 15.8,20.4 12.5,20.4 12.5,26.4 7.1,26.4 7.1,20.4 3.8,20.4" fill="#ffa200" stroke="#5a3800" stroke-width=".7" stroke-linejoin="round"/></g>
<rect x="171" y="81" width="1" height="26" fill="#808080"/><rect x="172" y="81" width="1" height="26" fill="#fff"/>
<g transform="translate(175,78)"><polygon points="7,13 14.4,16.6 14.4,24.6 7.4,20.4" fill="#5a4c34" stroke="#2a2418" stroke-width=".5"/>
<polygon points="14.4,16.6 23.6,13 23.4,20.4 14.4,24.6" fill="#8a7856" stroke="#2a2418" stroke-width=".5"/>
<polygon points="7,13 15.4,9.6 23.6,13 14.4,16.6" fill="#3c3222"/>
<polygon points="7,13 3.6,9.4 10.6,5.6 15.4,9.6" fill="#a8966e" stroke="#2a2418" stroke-width=".5"/>
<polygon points="15.4,9.6 17.4,5.4 26.4,8 23.6,13" fill="#b8a67e" stroke="#2a2418" stroke-width=".5"/>
<polygon points="23.6,13 26.8,15 23.4,20.4" fill="#3c3222" stroke="#2a2418" stroke-width=".5"/>
<polygon points="7,13 4.4,16.6 7.4,20.4" fill="#7a6848" stroke="#2a2418" stroke-width=".5"/><polygon points="20.6,27.0 26.2,20.4 23.1,20.4 23.1,12.6 18.1,12.6 18.1,20.4 15.0,20.4" fill="#ffea00" stroke="#6a5800" stroke-width=".7" stroke-linejoin="round"/></g>
<g transform="translate(206,78)"><g transform="translate(3.4,0)"><polygon points="7,13 14.4,16.6 14.4,24.6 7.4,20.4" fill="#5a4c34" stroke="#2a2418" stroke-width=".5"/>
<polygon points="14.4,16.6 23.6,13 23.4,20.4 14.4,24.6" fill="#8a7856" stroke="#2a2418" stroke-width=".5"/>
<polygon points="7,13 15.4,9.6 23.6,13 14.4,16.6" fill="#3c3222"/>
<polygon points="7,13 3.6,9.4 10.6,5.6 15.4,9.6" fill="#a8966e" stroke="#2a2418" stroke-width=".5"/>
<polygon points="15.4,9.6 17.4,5.4 26.4,8 23.6,13" fill="#b8a67e" stroke="#2a2418" stroke-width=".5"/>
<polygon points="23.6,13 26.8,15 23.4,20.4" fill="#3c3222" stroke="#2a2418" stroke-width=".5"/>
<polygon points="7,13 4.4,16.6 7.4,20.4" fill="#7a6848" stroke="#2a2418" stroke-width=".5"/></g><polygon points="10.0,12.6 15.7,19.2 12.7,19.2 12.7,26.4 7.3,26.4 7.3,19.2 4.3,19.2" fill="#ffa200" stroke="#5a3800" stroke-width=".7" stroke-linejoin="round"/></g>
<g transform="translate(237,78)"><polygon points="6,14 18,5 27,13.4 14.6,25" fill="#e2e2e2" fill-opacity=".6" stroke="#c6c6c6" stroke-width=".9"/>
<polygon points="9.4,11.8 15.6,17.7 15.4,24 10,18.4" fill="#dcdcdc"/>
<polygon points="15.6,17.7 25.4,13.5 24.6,19.6 15.4,24" fill="#f4f4f4"/>
<polygon points="9.4,11.8 18.6,7.4 25.4,13.5 15.6,17.7" fill="#ffffff"/>
<polygon points="9.2,13.4 14.9,19.2 11.8,19.2 11.8,26.4 6.6,26.4 6.6,19.2 3.5,19.2" fill="#dadada" stroke="#b4b4b4" stroke-width=".7" stroke-linejoin="round"/></g>
<rect x="268" y="79" width="1" height="30" fill="#808080"/><rect x="269" y="79" width="1" height="30" fill="#fff"/>
</svg>
</div>
<div id="tabs">
<div class="hl-w" style="left:1px;top:110px;width:58px"></div>
<div class="vl-w" style="left:1px;top:110px;height:21px"></div>
<div class="abs" style="left:3px;top:111px;width:55px;height:18px;background:#0a246a"></div>
<div class="abs" style="left:58px;top:111px;width:1px;height:19px;background:#808080"></div>
<div class="abs" style="left:59px;top:111px;width:1px;height:19px;background:#404040"></div>
<span style="left:8.6px;top:113px;color:#fff;letter-spacing:.08px">Top view</span>
<div class="hl-w" style="left:60px;top:111px;width:59px"></div>
<div class="vl-w" style="left:60px;top:112px;height:17px"></div>
<div class="abs" style="left:119px;top:112px;width:1px;height:17px;background:#808080"></div>
<div class="abs" style="left:120px;top:112px;width:1px;height:17px;background:#404040"></div>
<span style="left:63.5px;top:114px">Front view</span>
<div class="hl-w" style="left:60px;top:129px;width:1005px"></div>
<div class="abs" style="left:3px;top:129px;width:55px;height:1px;background:#e6e2d8"></div>
<div class="hl-d" style="left:1px;top:132px;width:1063px"></div>
<div class="abs" style="left:2px;top:133px;width:1061px;height:1px;background:#404040"></div>
<div class="abs" style="left:1px;top:132px;width:1px;height:955px;background:#808080"></div>
<div class="abs" style="left:2px;top:133px;width:1px;height:954px;background:#404040"></div>
<div class="abs" style="left:1064px;top:132px;width:1px;height:957px;background:#fff"></div>
<div class="hl-w" style="left:1px;top:1088px;width:1064px"></div>
</div>
<div id="view">
<svg class="abs" style="left:0;top:0;will-change:transform" width="1060" height="953" viewBox="3 134 1060 953">
<defs>
<filter id="conc" x="0" y="0" width="100%" height="100%" color-interpolation-filters="sRGB">
<feTurbulence type="fractalNoise" baseFrequency="0.075" numOctaves="5" seed="11" stitchTiles="stitch" result="n"/>
<feColorMatrix in="n" type="matrix" values="0 0 0 0 0  0 0 0 0 0  0 0 0 0 0  1.8 0 0 0 -0.36" result="a"/>
<feFlood flood-color="#d3d3cc" result="lt"/>
<feFlood flood-color="#8c8d96" result="dk"/>
<feComposite in="lt" in2="a" operator="in" result="l2"/>
<feTurbulence type="turbulence" baseFrequency="0.1" numOctaves="3" seed="5" stitchTiles="stitch" result="t"/>
<feColorMatrix in="t" type="matrix" values="0 0 0 0 0  0 0 0 0 0  0 0 0 0 0  0 -2.0 0 0 0.46" result="ta"/>
<feFlood flood-color="#777883" result="vn"/>
<feComposite in="vn" in2="ta" operator="in" result="v2"/>
<feMerge><feMergeNode in="dk"/><feMergeNode in="l2"/><feMergeNode in="v2"/></feMerge>
</filter>
<pattern id="concp" x="204" y="362" width="110" height="108" patternUnits="userSpaceOnUse">
<rect x="0" y="0" width="110" height="108" filter="url(#conc)"/>
</pattern>
<linearGradient id="glassH" x1="0" y1="0" x2="0" y2="1"><stop offset="0" stop-color="#adb2bd"/><stop offset=".55" stop-color="#898e9a"/><stop offset="1" stop-color="#a0a5b0"/></linearGradient>
<linearGradient id="wallR" x1="0" y1="0" x2="1" y2="0"><stop offset="0" stop-color="#2c2b26"/><stop offset=".55" stop-color="#33312b"/><stop offset="1" stop-color="#282723"/></linearGradient>
<linearGradient id="brown" x1="0" y1="0" x2="1" y2="0"><stop offset="0" stop-color="#4e3a2a"/><stop offset=".5" stop-color="#463222"/><stop offset="1" stop-color="#3a2a1c"/></linearGradient>
<linearGradient id="glassL" gradientUnits="userSpaceOnUse" x1="360" y1="392" x2="350" y2="412"><stop offset="0" stop-color="#b2b7c2"/><stop offset=".6" stop-color="#898e9a"/><stop offset="1" stop-color="#9ea3ae"/></linearGradient>
<linearGradient id="glassR" gradientUnits="userSpaceOnUse" x1="550" y1="398" x2="556" y2="418"><stop offset="0" stop-color="#adb2bd"/><stop offset=".55" stop-color="#898e9a"/><stop offset="1" stop-color="#a0a5b0"/></linearGradient>
<linearGradient id="dwall" gradientUnits="userSpaceOnUse" x1="160" y1="282" x2="160" y2="358"><stop offset="0" stop-color="#474244"/><stop offset=".5" stop-color="#3f3a3c"/><stop offset="1" stop-color="#393436"/></linearGradient>
<linearGradient id="dwall2" gradientUnits="userSpaceOnUse" x1="660" y1="282" x2="660" y2="358"><stop offset="0" stop-color="#403b3d"/><stop offset=".5" stop-color="#4a4547"/><stop offset="1" stop-color="#3a3537"/></linearGradient>
<linearGradient id="glassR2" gradientUnits="userSpaceOnUse" x1="618" y1="348" x2="628" y2="360"><stop offset="0" stop-color="#aab0bb"/><stop offset=".55" stop-color="#898e9a"/><stop offset="1" stop-color="#9ea3ae"/></linearGradient>
</defs>
<!-- axes -->
<line x1="203.5" y1="134" x2="203.5" y2="230" stroke="#00b400" stroke-width="1"/>
<line x1="203.5" y1="901" x2="203.5" y2="1087" stroke="#00a000" stroke-width="1" stroke-dasharray="1,2"/>
<line x1="3" y1="901.5" x2="163" y2="901.5" stroke="#c00000" stroke-width="1" stroke-dasharray="1,2"/>
<line x1="908" y1="901.5" x2="1063" y2="901.5" stroke="#c80000" stroke-width="1"/>
<!-- concrete -->
<rect x="204" y="362" width="672" height="539" fill="#abadb2"/>
<rect x="204" y="362" width="672" height="539" fill="url(#concp)"/>
<line x1="203.5" y1="360" x2="203.5" y2="901" stroke="#00a800" stroke-width="1.4"/>
<line x1="203" y1="901" x2="877" y2="901" stroke="#b40000" stroke-width="1.6"/>
<line x1="875.7" y1="428" x2="875.7" y2="900" stroke="#b4d0e6" stroke-width="1"/>
<!-- right boundary wall -->
<polygon points="877,428 899.5,428 899.5,920.5 877,900.5" fill="url(#wallR)" stroke="#000" stroke-width="1.2"/>
<polygon points="899.5,428 907.6,428 907.6,920.5 899.5,920.5" fill="#878274" stroke="#111" stroke-width=".8"/>
<line x1="908" y1="428" x2="908" y2="921" stroke="#000" stroke-width="1.6"/>
<!-- sill strips -->
<polygon points="203,357.5 284,357.5 289,361.5 203,361.5" fill="#82826c" stroke="#1a1a14" stroke-width=".8"/>
<polygon points="637.5,357.5 687,357.5 687,361.5 634,361.5" fill="#82826c" stroke="#1a1a14" stroke-width=".8"/>
<!-- dark walls -->
<polygon points="101,282.5 218,283 276.5,348 284,357.5 200.5,358" fill="url(#dwall)" stroke="#000" stroke-width="1.8" stroke-linejoin="round"/>
<polygon points="666,283 987,282.5 967,298 698.3,298 687,317.5 687,358 637.5,358" fill="url(#dwall2)" stroke="#000" stroke-width="1.7" stroke-linejoin="round"/>
<!-- yellow fence + brown strip -->
<polygon points="190,351.4 202.8,357.6 202.8,901.5 190,917" fill="url(#brown)"/>
<rect x="163.5" y="347.5" width="25.5" height="569" fill="#ffffcb" stroke="#000" stroke-width="2"/>
<line x1="174.8" y1="347" x2="174.8" y2="917" stroke="#000" stroke-width="1.3"/>
<line x1="203.5" y1="901" x2="3" y2="1080.5" stroke="#2424c0" stroke-width="1.2"/>
<!--BAY-->
<!-- bay window -->
<g stroke-linejoin="round">
<polyline points="338.8,414.6 418.4,456.6 509,456.6 589.6,413 635.6,361.6" fill="none" stroke="#a6a68c" stroke-width="2.4"/>
<polygon points="276.5,348 384,407 500.5,407.3 605.6,351 666,283.5 657,309 637.5,358 634.8,360.8 589,411.8 508.8,455 418.6,455 338.3,413.5 298.5,370.8 283.5,355.5" fill="#400e10" stroke="#000" stroke-width="1.1"/>
<!-- left panel -->
<polygon points="298.5,370.8 388,419 397.6,435.3 338.3,413.5" fill="#441012"/>
<polygon points="313.5,381.3 388.6,419.8 397.6,435.3 328.5,399.3" fill="url(#glassL)" stroke="#140404" stroke-width=".9"/>
<polyline points="298.5,370.8 388.6,419.8" fill="none" stroke="#100202" stroke-width="1"/>
<polygon points="328.5,399.3 397.6,435.3 412,444 418.6,455 338.3,413.5" fill="#441012" stroke="#140404" stroke-width=".7"/>
<!-- center panel -->
<polygon points="384,407 500.5,407.3 504,422.4 394.4,423.3" fill="#400e10" stroke="#100202" stroke-width=".9"/>
<polygon points="388.6,421 405.4,424.4 416.8,442 408,443.6" fill="#341006" stroke="#100202" stroke-width=".6"/>
<polygon points="407.9,425.2 494.5,425.2 496.6,441.7 417,441.7" fill="url(#glassH)" stroke="#140404" stroke-width=".9"/>
<polygon points="495.3,423.8 513.3,420 514.8,436.6 506.5,442.8 497.5,442" fill="#341006" stroke="#100202" stroke-width=".6"/>
<line x1="503.6" y1="422" x2="506.6" y2="443" stroke="#100202" stroke-width=".8"/>
<polygon points="411.5,443.6 507,443.6 509,454.6 418.4,454.6" fill="#441012" stroke="#100202" stroke-width=".9"/>
<!-- right lower panel -->
<polygon points="514,420 588.3,381 586,399 514.8,436.6" fill="url(#glassR)" stroke="#140404" stroke-width=".9"/>
<polyline points="504,421.6 603.6,367" fill="none" stroke="#100202" stroke-width="1"/>
<polygon points="514.8,436.6 586,399 593.6,400.5 589,411.8 508.8,454.6 506.5,442.8" fill="#441012" stroke="#100202" stroke-width=".8"/>
<polygon points="589,380.3 604,367.5 601,385.5 593.6,400.5 586,399" fill="#341006" stroke="#100202" stroke-width=".6"/>
<line x1="605.6" y1="351" x2="603" y2="370" stroke="#100202" stroke-width=".8"/>
<!-- right upper panel -->
<polygon points="603.3,371 646.7,321.6 639.5,342.2 601.3,385.6" fill="url(#glassR2)" stroke="#140404" stroke-width=".9"/>
<polygon points="601.3,385.6 639.5,342.2 646.7,321.6 650,318 637.5,358 634.8,360.8 589,411.8 593.6,400.5" fill="#441012" stroke="#100202" stroke-width=".7"/>
<polyline points="646.7,321.6 657,300 665.5,285" fill="none" stroke="#100202" stroke-width=".8"/>
</g>
<!--/BAY-->
<!-- roof -->
<polygon points="101,229 987.5,229 987.5,282.5 666.3,283 605.6,351 500.5,407.3 384,407 276.5,348 218,283 101,282.5" fill="#c5d6e1"/>
<polyline points="218,283 101,282.5 101,229 987.5,229 987.5,282.5 666.3,283" fill="none" stroke="#000" stroke-width="2" stroke-linejoin="miter"/>
<polyline points="218,283 276.5,348 384,407 500.5,407.3 605.6,351 666.3,283" fill="none" stroke="#000" stroke-width="1.2"/>
<!-- garage -->
<polygon points="687,317.5 698.3,298 694,423 687,430" fill="#6c6c6a" stroke="#000" stroke-width="1.6" stroke-linejoin="round"/>
<path d="M694,423 Q820,424.5 955.4,421.4 L940,430 Q815,420.5 687,430Z" fill="#6c6c6a" stroke="#000" stroke-width="1"/>
<polygon points="698.3,298 967,298 955.4,421.4 694,423" fill="#b0473a" stroke="#000" stroke-width="1.9" stroke-linejoin="round"/>
<g stroke="#6e2620" stroke-width="3.6" opacity=".22">
<line x1="702.8" y1="298.5" x2="699" y2="422.5"/><line x1="737.4" y1="298.5" x2="732.3" y2="422.5"/><line x1="772" y1="298.5" x2="766" y2="422.5"/><line x1="806.6" y1="298.5" x2="799.6" y2="422.5"/><line x1="841.2" y1="298.5" x2="833.4" y2="422.5"/><line x1="875.8" y1="298.5" x2="866.8" y2="422"/><line x1="910.4" y1="298.5" x2="900.4" y2="422"/><line x1="945" y1="298.5" x2="933.8" y2="421.5"/>
</g>
<g stroke="#6a241e" stroke-width="1.3" opacity=".6">
<line x1="702.8" y1="298.5" x2="699" y2="422.5"/><line x1="737.4" y1="298.5" x2="732.3" y2="422.5"/><line x1="772" y1="298.5" x2="766" y2="422.5"/><line x1="806.6" y1="298.5" x2="799.6" y2="422.5"/><line x1="841.2" y1="298.5" x2="833.4" y2="422.5"/><line x1="875.8" y1="298.5" x2="866.8" y2="422"/><line x1="910.4" y1="298.5" x2="900.4" y2="422"/><line x1="945" y1="298.5" x2="933.8" y2="421.5"/>
</g>
<!-- endpoints -->
<g fill="#000">
<rect x="98.6" y="226.6" width="4.8" height="4.8"/><rect x="98.6" y="280.1" width="4.8" height="4.8"/><rect x="215.6" y="280.6" width="4.8" height="4.8"/>
<rect x="985.1" y="226.6" width="4.8" height="4.8"/><rect x="985.1" y="280.1" width="4.8" height="4.8"/><rect x="664.1" y="280.6" width="4.8" height="4.8"/>
<rect x="964.6" y="295.6" width="4.8" height="4.8"/><rect x="953.1" y="419.1" width="4.8" height="4.8"/><rect x="937.6" y="427.6" width="4.3" height="4.3"/>
<rect x="161.1" y="345.1" width="4.8" height="4.8"/><rect x="172.6" y="345.1" width="4.8" height="4.8"/><rect x="186.1" y="345.6" width="4.8" height="4.8"/>
<rect x="161.1" y="914.6" width="4.8" height="4.8"/><rect x="172.6" y="914.6" width="4.8" height="4.8"/><rect x="186.1" y="914.1" width="4.8" height="4.8"/>
<rect x="198.6" y="355.6" width="4.8" height="4.3"/><rect x="202.6" y="359.6" width="4.3" height="3.8"/>
<rect x="202.6" y="899.1" width="4.8" height="4.3"/><rect x="873.1" y="897.6" width="4.3" height="4.8"/>
<rect x="897.1" y="917.1" width="4.8" height="4.8"/><rect x="905.6" y="917.1" width="4.8" height="4.8"/>
<rect x="684.6" y="315.1" width="4.3" height="4.3"/><rect x="696.1" y="296.1" width="4.3" height="4.3"/><rect x="692.1" y="420.6" width="4.3" height="4.3"/><rect x="685.1" y="427.6" width="4.3" height="4.3"/>
<rect x="274.5" y="346" width="4" height="4"/><rect x="381.6" y="405.1" width="4.3" height="3.8"/><rect x="498.6" y="405.1" width="4.3" height="3.8"/>
<rect x="635.5" y="356" width="4" height="4"/><rect x="684" y="356" width="4" height="4"/><rect x="415.6" y="453.1" width="4.8" height="4.3"/><rect x="506.1" y="453.1" width="4.8" height="4.3"/>
</g>
</svg>
<span class="abs" style="left:4.4px;top:2px;font-family:'DejaVu Sans','Liberation Sans',sans-serif;font-size:11.8px;line-height:14px;letter-spacing:.6px;will-change:transform;white-space:nowrap">Top</span>

</div>
<div id="status">
<svg class="abs" style="left:0;top:0;will-change:transform" width="1064" height="28" viewBox="1 1090 1064 28">
<defs><radialGradient id="cream" cx=".6" cy=".55" r=".7"><stop offset="0" stop-color="#ffffff"/><stop offset="1" stop-color="#eadcb0"/></radialGradient>
<radialGradient id="helpg" cx=".5" cy=".75" r=".8"><stop offset="0" stop-color="#9cc8f4"/><stop offset=".55" stop-color="#ffffff"/><stop offset="1" stop-color="#ffffff"/></radialGradient></defs>
<g transform="translate(13.8,1103)"><circle r="8.7" fill="url(#cream)" stroke="#7a480c" stroke-width="2.1"/><path d="M0,-5.2 Q3,-5 2.6,-1.4 Q1.8,1 .7,2 L.5,5.6 L-.5,5.6 L-.7,2 Q-1.8,1 -2.6,-1.4 Q-3,-5 0,-5.2Z" fill="#f8a8a0" stroke="#c8908a" stroke-width=".4"/></g><g transform="translate(42.1,1103)"><circle r="8.7" fill="url(#cream)" stroke="#7a480c" stroke-width="2.1"/><circle cx="0" cy="-4.6" r="1.4" fill="#000"/><path d="M-2.2,-2.8 L2.2,-2.8 L2,2 L1.2,2 L1,6 L-1,6 L-1.2,2 L-2,2Z" fill="#000"/></g><g transform="translate(70,1103)"><circle r="8.7" fill="url(#cream)" stroke="#7a480c" stroke-width="2.1"/><text x="0" y="5.4" text-anchor="middle" font-family="Liberation Serif, serif" font-size="16.5" fill="#8e8e84">G</text></g>
<rect x="89" y="1092" width="1" height="21" fill="#808080"/><rect x="90" y="1092" width="1" height="21" fill="#fff"/>
<circle cx="107.9" cy="1103" r="8.8" fill="url(#helpg)" stroke="#1c4a6a" stroke-width="2"/>
<text x="108" y="1109" text-anchor="middle" font-family="Liberation Sans, sans-serif" font-weight="bold" font-size="17" fill="#000">?</text>
<rect x="702" y="1091" width="1" height="23" fill="#808080"/><rect x="703" y="1091" width="1" height="23" fill="#fff"/>
<rect x="841" y="1091" width="206" height="1" fill="#808080"/><rect x="841" y="1091" width="1" height="24" fill="#808080"/>
<rect x="1046" y="1091" width="1" height="24" fill="#fff"/><rect x="841" y="1114" width="206" height="1" fill="#fff"/>
<path d="M1052,1114.5 L1064,1102.5 M1056,1114.5 L1064,1106.5 M1060,1114.5 L1064,1110.5" stroke="#808080" stroke-width="1.2"/>
<path d="M1053,1114.5 L1064,1103.5 M1057,1114.5 L1064,1107.5 M1061,1114.5 L1064,1111.5" stroke="#fff" stroke-width=".8"/>
<rect x="1" y="1116" width="1064" height="1" fill="#808080"/><rect x="1" y="1117" width="1038" height="1" fill="#fff"/><rect x="1041" y="1117" width="24" height="1" fill="#fff"/>
<rect x="25" y="1116" width="1" height="2" fill="#808080"/>
</svg>
<span style="left:124.6px;top:6px;font-size:12.56px;line-height:15px" id="sttext">Select objects. Shift to extend select. Drag mouse to select multiple.</span>
<span style="left:751.6px;top:6px;font-size:12.5px;line-height:15px" id="meas">Measurements</span>
</div>
<div id="frame"></div>
</body>
</html>
